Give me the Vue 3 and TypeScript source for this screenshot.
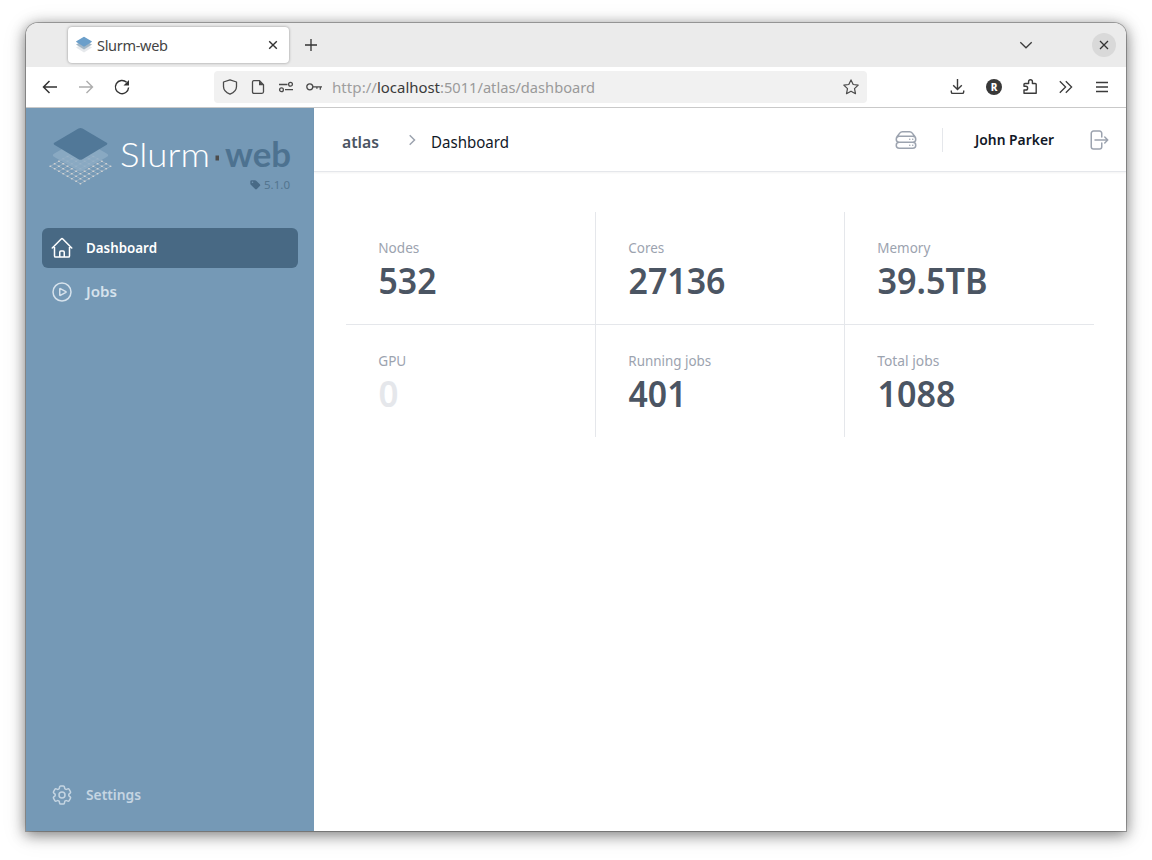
<script setup lang="ts">
interface Stat {
  label: string
  value: string
  width: number
  labelWidth: number
  empty?: boolean
}

const stats: Stat[] = [
  { label: 'Nodes', value: '532', width: 58, labelWidth: 41 },
  { label: 'Cores', value: '27136', width: 97, labelWidth: 36 },
  { label: 'Memory', value: '39.5TB', width: 110, labelWidth: 53 },
  { label: 'GPU', value: '0', width: 20, labelWidth: 28, empty: true },
  { label: 'Running jobs', value: '401', width: 58, labelWidth: 83 },
  { label: 'Total jobs', value: '1088', width: 78, labelWidth: 62 },
]

// Isometric lattice of the logo's bottom layer
const steps = [0, 1, 2, 3, 4, 5, 6, 7]
const nodeX = (i: number, j: number) => 8.3 + (i + j) * 4.3
const nodeY = (i: number, j: number) => 58.3 + (i - j) * 2.480
</script>

<template>
  <div class="desktop">
    <div class="window">
      <div class="tabs">
        <div class="tab">
          <svg class="favicon" width="18" height="18" viewBox="0 0 18 18">
            <path d="M1 11.500 9 7l8 4.500L9 16.500z" fill="#e6e9ec" />
            <path d="M1 8.500 9 4l8 4.500L9 13.500z" fill="#a3b7c6" />
            <path d="M1.300 5.300 8.500 1q.5-.3 1 0l7.200 4.300q.5.400 0 .8L9.500 10.500q-.5.300-1 0L1.300 6.100q-.5-.4 0-.8z" fill="#6b9fca" />
          </svg>
          <span class="tab-title">Slurm-web</span>
          <svg class="tab-close" width="10" height="10" viewBox="0 0 10 10"><path d="M1.200 1.200l7.600 7.600M8.800 1.200L1.200 8.800" stroke="#333" stroke-width="1.400" /></svg>
        </div>
        <svg class="plus" width="14" height="14" viewBox="0 0 14 14"><path d="M7 1v12M1 7h12" stroke="#333" stroke-width="1.300" /></svg>
        <svg class="tab-list" width="14" height="14" viewBox="0 0 14 14" fill="none"><path d="M1.300 4.300 7 9.800l5.700-5.500" stroke="#3b3b3b" stroke-width="1.300" /></svg>
        <div class="win-close">
          <svg width="10" height="10" viewBox="0 0 10 10"><path d="M1 1l8 8M9 1L1 9" stroke="#333" stroke-width="1.300" /></svg>
        </div>
      </div>

      <div class="toolbar">
        <svg class="nav-icon" viewBox="0 0 16 16"><path d="M15 8H1.500M7.500 2l-6 6 6 6" stroke="#333" stroke-width="1.500" /></svg>
        <svg class="nav-icon" viewBox="0 0 16 16"><path d="M1 8h13.500M8.500 2l6 6-6 6" stroke="#adadad" stroke-width="1.400" /></svg>
        <svg class="nav-icon" viewBox="0 0 16 16"><path d="M12.600 3.300A6.600 6.600 0 1 0 14.600 8.500" stroke="#333" stroke-width="1.400" /><path d="M15 1v5.500H9.500z" fill="#333" /></svg>
        <div class="urlbar">
          <svg class="url-icon" viewBox="0 0 16 16"><path d="M8 .8 14.500 3v4.500c0 3.800-3.500 6.500-6.500 7.700C5 14 1.500 11.300 1.500 7.500V3z" stroke-linejoin="round" /></svg>
          <svg class="url-icon" viewBox="0 0 16 16"><path d="M3.800 1.700h5.700l4 4v7.100q0 1.500-1.500 1.500H4q-1.500 0-1.500-1.500V3.200q0-1.500 1.300-1.500z" /><path d="M9 1.500v4.700h4.800z" fill="#4a4a4a" stroke="none" /></svg>
          <svg class="url-icon" viewBox="0 0 16 16"><path d="M1 5.500h8.500M7 10.700h8" stroke-width="1.300" /><circle cx="12.500" cy="5.300" r="1.900" /><circle cx="3.500" cy="10.700" r="1.900" /></svg>
          <svg class="url-icon" viewBox="0 0 16 16"><circle cx="3.800" cy="7.800" r="3" stroke-width="1.300" /><path d="M6.800 7.800H16M14.300 7.800v3M10.900 7.800v2" stroke-width="1.300" /></svg>
          <svg class="url" width="270" height="22" viewBox="0 0 270 22">
            <text x="0" y="16.500" fill="#9f9f9f" textLength="45" lengthAdjust="spacingAndGlyphs">http://</text>
            <text x="45" y="16.500" fill="#3b3b3b" textLength="63" lengthAdjust="spacingAndGlyphs">localhost</text>
            <text x="108" y="16.500" fill="#9a9a9a" textLength="155" lengthAdjust="spacingAndGlyphs">:5011/atlas/dashboard</text>
          </svg>
          <svg class="star" viewBox="0 0 16 16"><path d="M8 .9l2.200 4.600 5 .6-3.700 3.500 1 5.100L8 12.200l-4.500 2.500 1-5.100L.8 6.100l5-.6z" /></svg>
        </div>
        <div class="tools">
          <svg class="tool" viewBox="0 0 16 16"><path d="M7.500 0v10.500M3.200 6.300l4.300 4.300 4.300-4.300M1.300 11.500v1.400q0 1.500 1.500 1.500h9.400q1.500 0 1.500-1.500v-1.400" /></svg>
          <div class="ext">R</div>
          <svg class="tool" viewBox="0 0 16 16"><path d="M2 11v3.300h12.200V5.500q0-1-1-1h-2.800V2.600a1.900 1.900 0 0 0-3.800 0v1.900H3q-1 0-1 1v1.800h1.800a1.800 1.800 0 0 1 0 3.700z" stroke-linejoin="round" /></svg>
          <svg class="tool" viewBox="0 0 16 16"><path d="M1.800 2.200 7.600 8l-5.800 5.800M7.800 2.200 13.600 8l-5.800 5.800" stroke-width="1.300" /></svg>
          <svg class="tool" viewBox="0 0 16 16"><path d="M2 3.500h12M2 8h12M2 12.500h12" /></svg>
        </div>
      </div>

      <div class="page">
        <aside class="sidebar">
          <svg class="logo" width="256" height="90" viewBox="0 0 256 90">
            <g stroke="#b4c1cc" stroke-width=".7" opacity=".75">
              <g v-for="i in steps" :key="i">
                <line :x1="nodeX(i, 0)" :y1="nodeY(i, 0)" :x2="nodeX(i, 7)" :y2="nodeY(i, 7)" />
                <line :x1="nodeX(0, i)" :y1="nodeY(0, i)" :x2="nodeX(7, i)" :y2="nodeY(7, i)" />
              </g>
            </g>
            <g v-for="i in steps" :key="i" fill="#d5d5d5">
              <ellipse v-for="j in steps" :key="j" :cx="nodeX(i, j)" :cy="nodeY(i, j)" rx="1.050" ry=".75" />
            </g>
            <path d="M11.500 46 37 31.300q1.500-.8 3 0L65.500 46q1.500 1.300 0 2.600L40 63.300q-1.500.8-3 0L11.500 48.600q-1.500-1.300 0-2.600z" fill="#8dabc4" opacity=".86" />
            <path d="M12.300 34.700 36.500 20.500q2-1 4 0l24.200 14.200q1.500 1 0 2L40.500 51.300q-2 1-4 0L12.300 36.700q-1.500-1 0-2z" fill="#517898" />
            <text class="logo-thin" x="78" y="58.500" textLength="90" lengthAdjust="spacingAndGlyphs">Slurm</text>
            <rect x="173.500" y="47.500" width="3.500" height="5" fill="#4c4c4c" />
            <text class="logo-bold" x="183" y="58.500" textLength="66" lengthAdjust="spacingAndGlyphs">web</text>
            <path d="M208.300 73.500q0-1.300 1.300-1.300h3.400q.7 0 1.200.5l3.600 3.600q.9.900 0 1.800l-2.900 2.900q-.9.900-1.800 0l-4.300-4.200q-.5-.5-.5-1.200z" fill="#486a86" />
            <circle cx="210.500" cy="74.300" r=".8" fill="#7599b6" />
            <text class="version" x="222" y="81" textLength="26" lengthAdjust="spacingAndGlyphs">5.1.0</text>
          </svg>

          <nav class="menu">
            <a class="item active">
              <svg class="hero" viewBox="0 0 24 24"><path d="M2.250 12l8.954-8.955c.44-.439 1.152-.439 1.591 0L21.750 12M4.500 9.750v10.125c0 .621.504 1.125 1.125 1.125H9.750v-4.875c0-.621.504-1.125 1.125-1.125h2.250c.621 0 1.125.504 1.125 1.125V21h4.125c.621 0 1.125-.504 1.125-1.125V9.750M8.250 21h8.250" /></svg>
              <svg class="label" width="72" height="20"><text y="15" textLength="71" lengthAdjust="spacingAndGlyphs">Dashboard</text></svg>
            </a>
            <a class="item">
              <svg class="hero" viewBox="0 0 24 24"><path d="M21 12a9 9 0 11-18 0 9 9 0 0118 0z" /><path d="M15.910 11.672a.375.375 0 010 .656l-5.603 3.113a.375.375 0 01-.557-.328V8.887c0-.286.307-.466.557-.327l5.603 3.112z" /></svg>
              <svg class="label" width="72" height="20"><text y="15" textLength="31" lengthAdjust="spacingAndGlyphs">Jobs</text></svg>
            </a>
            <a class="item settings">
              <svg class="hero" viewBox="0 0 24 24"><path d="M9.594 3.940c.09-.542.56-.94 1.110-.94h2.593c.55 0 1.020.398 1.110.94l.213 1.281c.063.374.313.686.645.87.074.04.147.083.22.127.324.196.72.257 1.075.124l1.217-.456a1.125 1.125 0 011.370.49l1.296 2.247a1.125 1.125 0 01-.26 1.431l-1.003.827c-.293.24-.438.613-.431.992a6.759 6.759 0 010 .255c-.007.378.138.75.43.99l1.005.828c.424.35.534.954.26 1.430l-1.298 2.247a1.125 1.125 0 01-1.369.491l-1.217-.456c-.355-.133-.75-.072-1.076.124a6.570 6.570 0 01-.22.128c-.331.183-.581.495-.644.869l-.213 1.280c-.09.543-.56.941-1.110.941h-2.594c-.55 0-1.020-.398-1.110-.94l-.213-1.281c-.062-.374-.312-.686-.644-.87a6.520 6.520 0 01-.22-.127c-.325-.196-.72-.257-1.076-.124l-1.217.456a1.125 1.125 0 01-1.369-.49l-1.297-2.247a1.125 1.125 0 01.26-1.431l1.004-.827c.292-.24.437-.613.43-.992a6.932 6.932 0 010-.255c.007-.378-.138-.75-.43-.99l-1.004-.828a1.125 1.125 0 01-.26-1.430l1.297-2.247a1.125 1.125 0 011.370-.491l1.216.456c.356.133.751.072 1.076-.124.072-.044.146-.087.22-.128.332-.183.582-.495.644-.869l.214-1.281z" /><path d="M15 12a3 3 0 11-6 0 3 3 0 016 0z" /></svg>
              <svg class="label" width="72" height="20"><text y="15" textLength="55" lengthAdjust="spacingAndGlyphs">Settings</text></svg>
            </a>
          </nav>
        </aside>

        <main class="main">
          <header class="header">
            <svg class="crumb cluster" width="38" height="24"><text y="18" textLength="37" lengthAdjust="spacingAndGlyphs">atlas</text></svg>
            <svg class="chevron" width="20" height="20" viewBox="0 0 20 20"><path d="M7.700 5.300 12.500 10l-4.800 4.700" /></svg>
            <svg class="crumb" width="80" height="24"><text y="18" textLength="78" lengthAdjust="spacingAndGlyphs">Dashboard</text></svg>
            <svg class="hero servers" viewBox="0 0 24 24"><path d="M5.250 14.250h13.500m-13.500 0a3 3 0 01-3-3m3 3a3 3 0 100 6h13.500a3 3 0 100-6m-16.500-3a3 3 0 013-3h13.500a3 3 0 013 3m-19.500 0a4.500 4.500 0 01.9-2.700L5.737 5.100a3.375 3.375 0 012.700-1.350h7.126c1.062 0 2.062.5 2.700 1.350l2.587 3.450a4.500 4.500 0 01.9 2.700m0 0a3 3 0 01-3 3m0 3h.008v.008h-.008v-.008zm0-6h.008v.008h-.008v-.008zm-3 6h.008v.008h-.008v-.008zm0-6h.008v.008h-.008v-.008z" /></svg>
            <div class="divider"></div>
            <svg class="user" width="80" height="20"><text y="15" textLength="79" lengthAdjust="spacingAndGlyphs">John Parker</text></svg>
            <svg class="hero logout" viewBox="0 0 24 24"><path d="M15.750 9V5.250A2.250 2.250 0 0013.500 3h-6a2.250 2.250 0 00-2.250 2.250v13.500A2.250 2.250 0 007.500 21h6a2.250 2.250 0 002.250-2.250V15m3 0l3-3m0 0l-3-3m3 3H9" /></svg>
          </header>

          <section class="stats">
            <div v-for="s in stats" :key="s.label" class="stat">
              <svg class="stat-label" width="120" height="24"><text x=".3" y="17" :textLength="s.labelWidth" lengthAdjust="spacingAndGlyphs">{{ s.label }}</text></svg>
              <svg class="stat-value" :class="{ empty: s.empty }" width="160" height="40"><text x=".5" y="34" :textLength="s.width" lengthAdjust="spacingAndGlyphs">{{ s.value }}</text></svg>
            </div>
          </section>
        </main>
      </div>
    </div>
  </div>
</template>

<style>
body {
  background: #fff;
  overflow: hidden;
}
</style>

<style scoped>
* {
  box-sizing: border-box;
}
svg {
  display: block;
  flex: none;
  overflow: visible;
}
.desktop {
  height: 860px;
  padding: 23px 26px 29px;
  font-family: "Noto Sans", "Open Sans", sans-serif;
}
.window {
  display: flex;
  flex-direction: column;
  height: 808px;
  border-radius: 12px 12px 0 0;
  background: #fff;
  box-shadow: 0 0 0 1px rgba(0, 0, 0, 0.28), 0 3px 14px 1px rgba(0, 0, 0, 0.45), 0 4px 24px 2px rgba(0, 0, 0, 0.1);
}
.tabs {
  display: flex;
  align-items: center;
  height: 44px;
  padding: 0 10px 0 42px;
  background: #ebebeb;
  border-radius: 12px 12px 0 0;
}
.tab {
  display: flex;
  align-items: center;
  width: 221px;
  height: 36px;
  padding: 0 11px 0 7px;
  background: #fff;
  border-radius: 4px;
  box-shadow: 0 0 3px rgba(0, 0, 0, 0.38);
}
.tab-title {
  margin-left: 4px;
  font-size: 14.500px;
  letter-spacing: -0.3px;
  color: #444;
}
.tab-close {
  margin-left: auto;
}
.plus {
  margin-left: 14.500px;
}
.tab-list {
  margin-left: auto;
}
.win-close {
  display: flex;
  align-items: center;
  justify-content: center;
  width: 24px;
  height: 24px;
  margin-left: 59px;
  border-radius: 50%;
  background: #d9d9d9;
}
.toolbar {
  display: flex;
  align-items: center;
  height: 41px;
  padding-left: 16px;
  border-bottom: 1px solid #c9c9c9;
}
.nav-icon {
  width: 16px;
  height: 16px;
  margin-right: 20px;
  fill: none;
}
.urlbar {
  display: flex;
  align-items: center;
  width: 653px;
  height: 32px;
  margin-left: 64px;
  padding: 0 8px;
  background: #f1f1f1;
  border-radius: 4px;
}
.url-icon {
  width: 16px;
  height: 16px;
  margin-right: 12px;
  fill: none;
  stroke: #4a4a4a;
  stroke-width: 1.300;
}
.url {
  margin-left: -2px;
  font-size: 15px;
}
.star {
  width: 16px;
  height: 16px;
  margin-left: auto;
  fill: none;
  stroke: #4a4a4a;
  stroke-width: 1.200;
  stroke-linejoin: round;
}
.tools {
  display: flex;
  align-items: center;
  gap: 20px;
  margin-left: 83px;
}
.tool {
  width: 16px;
  height: 16px;
  fill: none;
  stroke: #3b3b3b;
  stroke-width: 1.400;
}
.ext {
  width: 16px;
  height: 16px;
  border-radius: 50%;
  background: #383838;
  color: #fff;
  font-size: 10px;
  font-weight: 800;
  line-height: 16px;
  text-align: center;
}
.page {
  display: flex;
  flex: 1;
}
.sidebar {
  display: flex;
  flex-direction: column;
  width: 288px;
  padding: 0 16px 16px;
  background: #7599b6;
}
.logo-thin {
  font: 300 34px Lato, sans-serif;
  fill: #fff;
}
.logo-bold {
  font: 700 34px Lato, sans-serif;
  fill: #4d7290;
}
.version {
  font-size: 11px;
  fill: #53758f;
}
.menu {
  display: flex;
  flex: 1;
  flex-direction: column;
  gap: 4px;
  margin-top: 30px;
}
.item {
  display: flex;
  align-items: center;
  gap: 12px;
  height: 40px;
  padding: 0 8px;
  border-radius: 6px;
  color: #d6e2ec;
}
.active {
  background: #486984;
  color: #fff;
}
.settings {
  margin-top: auto;
  color: #c5d5e2;
}
.label {
  font-size: 14px;
  font-weight: 600;
  fill: currentColor;
}
.hero {
  width: 24px;
  height: 24px;
  fill: none;
  stroke: currentColor;
  stroke-width: 1.500;
  stroke-linecap: round;
  stroke-linejoin: round;
}
.main {
  flex: 1;
}
.header {
  display: flex;
  align-items: center;
  height: 64px;
  padding: 0 16px 0 28px;
  border-bottom: 1px solid #e5e7eb;
  box-shadow: 0 1px 2px rgba(0, 0, 0, 0.05);
}
.crumb {
  margin-top: 5px;
  font-size: 16px;
  fill: #111827;
}
.cluster {
  font-weight: 600;
  fill: #4b5563;
}
.chevron {
  margin: 1px 9px 0 22px;
  fill: none;
  stroke: #9ca3af;
  stroke-width: 1.500;
}
.servers {
  margin-left: auto;
  color: #9ca3af;
}
.divider {
  width: 1px;
  height: 24px;
  margin: 0 32px 0 24px;
  background: #e5e7eb;
}
.user {
  font-size: 14px;
  font-weight: 600;
  fill: #111827;
}
.logout {
  margin-left: 31px;
  color: #9ca3af;
}
.stats {
  display: grid;
  grid-template-columns: repeat(3, 1fr);
  gap: 1px;
  margin: 40px 32px 0;
  background: #e5e7eb;
}
.stat {
  height: 112px;
  padding: 24px 32px;
  background: #fff;
}
.stat-label {
  font-size: 14px;
  fill: #9ca3af;
}
.stat-value {
  font-size: 36px;
  font-weight: 600;
  fill: #4b5563;
}
.empty {
  fill: #e5e7eb;
}
</style>
